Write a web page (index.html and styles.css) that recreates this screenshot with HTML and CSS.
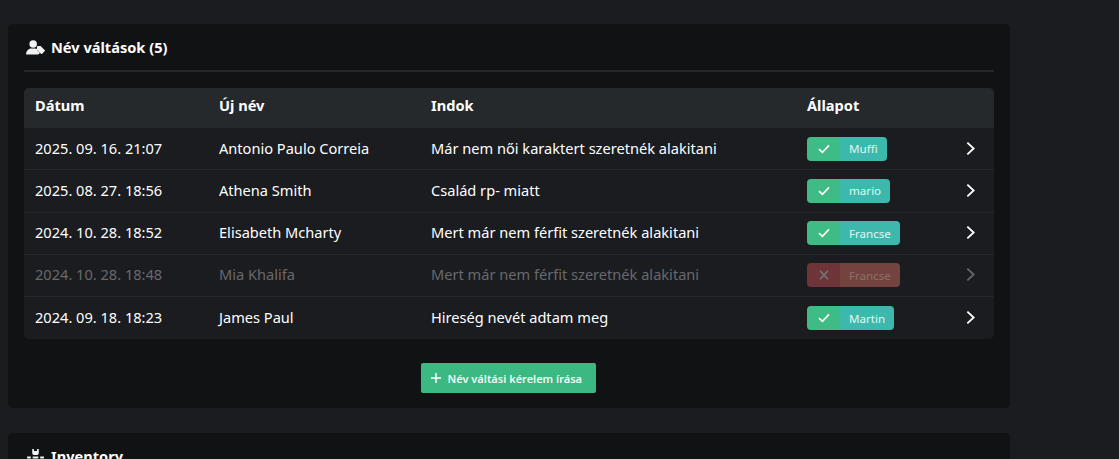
FILE: index.html
```html
<!DOCTYPE html>
<html lang="hu">
<head>
<meta charset="utf-8">
<title>Név váltások</title>
<link rel="stylesheet" href="styles.css">
</head>
<body>
<section class="card">
  <h2 class="card-title">
    <svg class="title-icon" viewBox="0 0 20 16"><circle cx="7.5" cy="4.2" r="4"/><path d="M0 15.2c0-3.6 2.4-6.2 5.6-6.2h3.6c.9 0 1.7.2 2.4.6v1.1l3 3c-.5 1.1-1.2 1.7-2.2 1.7H.8c-.5 0-.8-.1-.8-.2z"/><path d="M12.3 6.4h3.1l4.3 4.3a.9.9 0 0 1 0 1.3l-2.6 2.6a.9.9 0 0 1-1.3 0l-4.3-4.3V7.2z"/></svg>
    Név váltások (5)
  </h2>
  <hr class="divider">
  <table class="changes">
    <colgroup><col class="c-date"><col class="c-name"><col class="c-reason"><col class="c-state"><col></colgroup>
    <thead>
      <tr><th>Dátum</th><th>Új név</th><th>Indok</th><th>Állapot</th><th></th></tr>
    </thead>
    <tbody>
      <tr><td>2025. 09. 16. 21:07</td><td>Antonio Paulo Correia</td><td>Már nem női karaktert szeretnék alakitani</td>
        <td class="state"><span class="badge"><span class="badge-icon"><svg viewBox="0 0 12 10"><path d="M1 5.2l3.4 3.2L11 1.4"/></svg></span><span class="badge-name">Muffi</span></span></td>
        <td class="arrow"><svg viewBox="0 0 10 16"><path d="M1.5 1.5L8.5 8l-7 6.5"/></svg></td></tr>
      <tr><td>2025. 08. 27. 18:56</td><td>Athena Smith</td><td>Család rp- miatt</td>
        <td class="state"><span class="badge"><span class="badge-icon"><svg viewBox="0 0 12 10"><path d="M1 5.2l3.4 3.2L11 1.4"/></svg></span><span class="badge-name">mario</span></span></td>
        <td class="arrow"><svg viewBox="0 0 10 16"><path d="M1.5 1.5L8.5 8l-7 6.5"/></svg></td></tr>
      <tr><td>2024. 10. 28. 18:52</td><td>Elisabeth Mcharty</td><td>Mert már nem férfit szeretnék alakitani</td>
        <td class="state"><span class="badge"><span class="badge-icon"><svg viewBox="0 0 12 10"><path d="M1 5.2l3.4 3.2L11 1.4"/></svg></span><span class="badge-name">Francse</span></span></td>
        <td class="arrow"><svg viewBox="0 0 10 16"><path d="M1.5 1.5L8.5 8l-7 6.5"/></svg></td></tr>
      <tr class="rejected"><td>2024. 10. 28. 18:48</td><td>Mia Khalifa</td><td>Mert már nem férfit szeretnék alakitani</td>
        <td class="state"><span class="badge"><span class="badge-icon"><svg viewBox="0 0 12 10"><path d="M2 .8l8 8.4M10 .8l-8 8.4"/></svg></span><span class="badge-name">Francse</span></span></td>
        <td class="arrow"><svg viewBox="0 0 10 16"><path d="M1.5 1.5L8.5 8l-7 6.5"/></svg></td></tr>
      <tr><td>2024. 09. 18. 18:23</td><td>James Paul</td><td>Hireség nevét adtam meg</td>
        <td class="state"><span class="badge"><span class="badge-icon"><svg viewBox="0 0 12 10"><path d="M1 5.2l3.4 3.2L11 1.4"/></svg></span><span class="badge-name">Martin</span></span></td>
        <td class="arrow"><svg viewBox="0 0 10 16"><path d="M1.5 1.5L8.5 8l-7 6.5"/></svg></td></tr>
    </tbody>
  </table>
  <div class="actions">
    <button class="add-btn" type="button"><svg viewBox="0 0 10 10"><path d="M5 0v10M0 5h10"/></svg>Név váltási kérelem írása</button>
  </div>
</section>
<section class="card card-next">
  <h2 class="card-title">
    <svg class="title-icon" viewBox="0 0 20 16"><path d="M6.5 0h1.8v2h3.4V0h1.8v4.2c0 1.2-1 2.2-2.2 2.2H8.7c-1.2 0-2.2-1-2.2-2.2z"/><path d="M1 8h4v2H1zM7 8h6v2H7zM15 8h4v2h-4zM1 11h18v5H1z"/></svg>
    Inventory
  </h2>
</section>
</body>
</html>
```
FILE: styles.css
```css
* { box-sizing: border-box; }
html, body { height: 459px; overflow: hidden; }
body {
  margin: 0;
  padding: 24px 109px 0 8px;
  background: #1a1c20;
  color: #fff;
  font-family: "Noto Sans", "Open Sans", sans-serif;
  font-size: 14.6px;
}
.card {
  background: #111214;
  border-radius: 5px;
  padding: 14px 16px 15px;
  height: 384px;
}
.card-next { margin-top: 25px; }
.card-title {
  display: flex;
  align-items: center;
  gap: 6px;
  height: 18px;
  margin: 0;
  padding-left: 2px;
  font-size: 14.6px;
  font-weight: 700;
  line-height: 18px;
}
.title-icon { width: 19px; height: 15px; fill: #f2f2f2; flex: none; }
.divider { height: 2px; margin: 14px 0 16px; border: 0; background: #25282b; }
.changes {
  width: 970px;
  table-layout: fixed;
  border-collapse: separate;
  border-spacing: 0;
  background: #1a1c20;
  border-radius: 5px;
  overflow: hidden;
}
.c-date { width: 195px; }
.c-name { width: 212px; }
.c-reason { width: 376px; }
.c-state { width: 148px; }
th {
  height: 40px;
  padding: 0 0 6px 11px;
  background: #25292c;
  text-align: left;
  font-weight: 700;
  font-size: 14.6px;
}
th:nth-child(n+2), td:nth-child(n+2) { padding-left: 0; }
td {
  height: 42.25px;
  padding: 0 0 2px 11px;
  border-bottom: 1px solid #25282b;
  white-space: nowrap;
  font-size: 14.6px;
  font-weight: 430;
}
tbody tr:last-child td { border-bottom: 0; }
td.state { padding-bottom: 0; }
.badge {
  display: flex;
  width: fit-content;
  height: 24px;
  border-radius: 4px;
  overflow: hidden;
  font-size: 11.6px;
  font-weight: 400;
}
.badge-icon {
  display: flex;
  width: 33px;
  align-items: center;
  justify-content: center;
  background: #3fbc85;
}
.badge-icon svg { width: 12px; height: 10px; fill: none; stroke: #fff; stroke-width: 1.6; }
.badge-name {
  display: flex;
  align-items: center;
  padding: 0 9px;
  background: #3cb9ac;
  color: #e4f5f2;
}
td.arrow { padding: 0 0 1px 11px; }
.arrow svg { display: block; width: 9px; height: 15px; fill: none; stroke: #fff; stroke-width: 2; }
.rejected td { color: #69696c; }
.rejected .badge-icon { background: #6d3538; }
.rejected .badge-icon svg { stroke: #77777a; }
.rejected .badge-name { background: #75433f; color: #8c6f6b; }
.rejected .arrow svg { stroke: #66676a; }
.actions { display: flex; justify-content: center; margin-top: 24px; padding-right: 2px; }
.add-btn {
  display: flex;
  align-items: center;
  gap: 7px;
  height: 30px;
  padding: 0 13.5px 0 10px;
  border: 0;
  border-radius: 2px;
  background: #3cb883;
  color: #f2faf6;
  font: 600 11px "Noto Sans", "Open Sans", sans-serif;
}
.add-btn svg { width: 10px; height: 10px; fill: none; stroke: #fff; stroke-width: 1.5; }
```
